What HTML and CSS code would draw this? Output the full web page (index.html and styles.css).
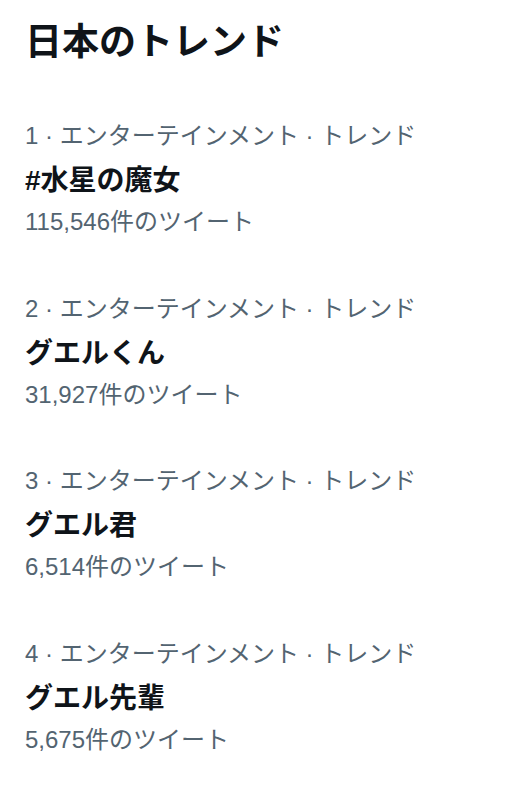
FILE: index.html
```html
<!DOCTYPE html>
<html lang="ja">
<head>
<meta charset="utf-8">
<link rel="stylesheet" href="styles.css">
</head>
<body>
<main class="trends">
  <h1 class="trends-title">日本のトレンド</h1>
  <ul class="trend-list">
    <li class="trend">
      <div class="trend-meta">1 · エンターテインメント · トレンド</div>
      <div class="trend-name">#水星の魔女</div>
      <div class="trend-count">115,546件のツイート</div>
    </li>
    <li class="trend">
      <div class="trend-meta">2 · エンターテインメント · トレンド</div>
      <div class="trend-name">グエルくん</div>
      <div class="trend-count">31,927件のツイート</div>
    </li>
    <li class="trend">
      <div class="trend-meta">3 · エンターテインメント · トレンド</div>
      <div class="trend-name">グエル君</div>
      <div class="trend-count">6,514件のツイート</div>
    </li>
    <li class="trend">
      <div class="trend-meta">4 · エンターテインメント · トレンド</div>
      <div class="trend-name">グエル先輩</div>
      <div class="trend-count">5,675件のツイート</div>
    </li>
  </ul>
</main>
</body>
</html>
```

FILE: styles.css
```css
html, body {
  margin: 0;
  padding: 0;
  background: #ffffff;
}
body {
  font-family: "Liberation Sans", "Noto Sans CJK JP", sans-serif;
  color: #0f1419;
}
.trends {
  padding: 18px 0 0 25px;
}
.trends-title {
  margin: 0;
  font-size: 37px;
  line-height: 50px;
  font-weight: 700;
}
.trend-list {
  list-style: none;
  margin: 48px 0 0 0;
  padding: 0;
  display: flex;
  flex-direction: column;
  gap: 50.5px;
}
.trend-meta {
  font-size: 24px;
  line-height: 40px;
  color: #536471;
}
.trend-name {
  font-size: 28px;
  line-height: 50px;
  font-weight: 700;
}
.trend-count {
  font-size: 24px;
  line-height: 32px;
  color: #536471;
}
```
